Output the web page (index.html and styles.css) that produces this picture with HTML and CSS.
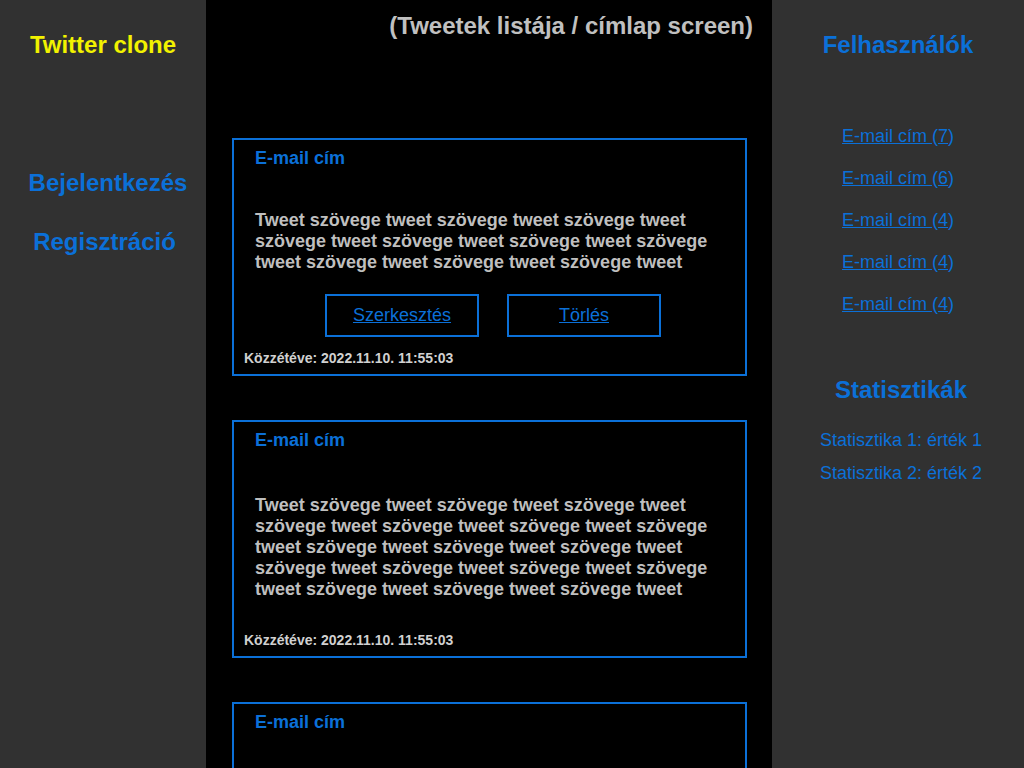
FILE: index.html
```html
<!DOCTYPE html>
<html lang="hu">
<head>
<meta charset="utf-8">
<title>Twitter clone</title>
<link rel="stylesheet" href="styles.css">
</head>
<body>
<div class="layout">
  <aside class="side side-left">
    <h1 class="brand">Twitter clone</h1>
    <nav class="auth-nav">
      <a class="auth-link auth-login" href="#">Bejelentkezés</a>
      <a class="auth-link" href="#">Regisztráció</a>
    </nav>
  </aside>

  <main class="feed">
    <h2 class="screen-title">(Tweetek listája / címlap screen)</h2>

    <article class="tweet">
      <div class="tweet-author">E-mail cím</div>
      <p class="tweet-body">Tweet szövege tweet szövege tweet szövege tweet szövege tweet szövege tweet szövege tweet szövege tweet szövege tweet szövege tweet szövege tweet</p>
      <div class="tweet-actions">
        <div class="action-box"><a href="#">Szerkesztés</a></div>
        <div class="action-box"><a href="#">Törlés</a></div>
      </div>
      <div class="tweet-date">Közzétéve: 2022.11.10. 11:55:03</div>
    </article>

    <article class="tweet">
      <div class="tweet-author">E-mail cím</div>
      <p class="tweet-body tweet-body-long">Tweet szövege tweet szövege tweet szövege tweet szövege tweet szövege tweet szövege tweet szövege tweet szövege tweet szövege tweet szövege tweet szövege tweet szövege tweet szövege tweet szövege tweet szövege tweet szövege tweet szövege tweet</p>
      <div class="tweet-date">Közzétéve: 2022.11.10. 11:55:03</div>
    </article>

    <article class="tweet">
      <div class="tweet-author">E-mail cím</div>
    </article>
  </main>

  <aside class="side side-right">
    <h2 class="side-title">Felhasználók</h2>
    <ul class="user-list">
      <li><a href="#">E-mail cím </a>(<a href="#">7</a>)</li>
      <li><a href="#">E-mail cím </a>(<a href="#">6</a>)</li>
      <li><a href="#">E-mail cím </a>(<a href="#">4</a>)</li>
      <li><a href="#">E-mail cím </a>(<a href="#">4</a>)</li>
      <li><a href="#">E-mail cím </a>(<a href="#">4</a>)</li>
    </ul>
    <div class="stats">
      <h2 class="side-title">Statisztikák</h2>
      <ul class="stats-list">
        <li>Statisztika 1: érték 1</li>
        <li>Statisztika 2: érték 2</li>
      </ul>
    </div>
  </aside>
</div>
</body>
</html>
```

FILE: styles.css
```css
* { box-sizing: border-box; }

html, body {
  margin: 0;
  padding: 0;
  height: 100%;
  overflow: hidden;
  background: #000;
  font-family: "Liberation Sans", Arial, sans-serif;
}

.layout {
  display: grid;
  grid-template-columns: 206px 566px 1fr;
  height: 768px;
}

.side {
  background: #313131;
  text-align: center;
  padding-top: 31px;
}

.brand {
  margin: 0;
  font-size: 24px;
  line-height: 28px;
  font-weight: 700;
  color: #f2f200;
}

.auth-nav {
  display: flex;
  flex-direction: column;
  align-items: center;
  gap: 31px;
  margin-top: 110px;
  padding-left: 3px;
}

.auth-link {
  font-size: 24px;
  line-height: 28px;
  font-weight: 700;
  color: #0b70d8;
  text-decoration: none;
}

.auth-login {
  margin-left: 7px;
}

.feed {
  background: #000;
  overflow: hidden;
  padding-top: 12px;
}

.screen-title {
  margin: 0 19px 98px 0;
  text-align: right;
  font-size: 24px;
  line-height: 28px;
  font-weight: 700;
  color: #c0c0c0;
}

.tweet {
  display: flex;
  flex-direction: column;
  height: 238px;
  margin: 0 25px 44px 26px;
  border: 2px solid #0b70d8;
  padding: 8px 21px 8px 21px;
}

.tweet-author {
  font-size: 18px;
  line-height: 21px;
  font-weight: 700;
  color: #0b70d8;
}

.tweet-body {
  margin: 41px 0 0;
  font-size: 18px;
  line-height: 21px;
  font-weight: 700;
  color: #bfbfbf;
}

.tweet-body-long {
  margin-top: 44px;
}

.tweet-actions {
  display: flex;
  justify-content: center;
  gap: 28px;
  margin-top: 21px;
  padding-left: 7px;
}

.action-box {
  width: 154px;
  height: 43px;
  border: 2px solid #0b70d8;
  display: flex;
  align-items: center;
  justify-content: center;
}

.action-box a {
  font-size: 18px;
  color: #0b70d8;
  text-decoration: underline;
}

.tweet-date {
  margin-top: auto;
  margin-left: -11px;
  font-size: 14px;
  line-height: 16px;
  font-weight: 700;
  color: #d0d0d0;
}

.side-title {
  margin: 0;
  font-size: 24px;
  line-height: 28px;
  font-weight: 700;
  color: #0b70d8;
}

.user-list,
.stats-list {
  list-style: none;
  margin: 0;
  padding: 0;
  display: flex;
  flex-direction: column;
  align-items: center;
  font-size: 18px;
  line-height: 21px;
  color: #0b70d8;
}

.user-list {
  margin-top: 67px;
  gap: 21px;
}

.user-list a {
  color: #0b70d8;
  text-decoration: underline;
}

.stats {
  margin-top: 61px;
  padding-left: 6px;
}

.stats-list {
  margin-top: 26px;
  gap: 12px;
}
```
